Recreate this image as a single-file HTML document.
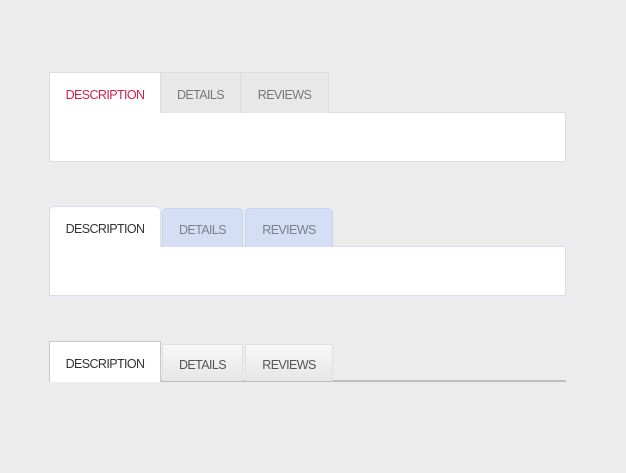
<!DOCTYPE html><html><head><style>
body{margin:0;width:626px;height:473px;background:#ececec;position:relative;font-family:"Liberation Sans",sans-serif;overflow:hidden}
div{position:absolute;box-sizing:border-box}
.t{display:flex;align-items:center;justify-content:center;font-size:12.5px;letter-spacing:-0.6px;color:#777;padding-top:3px}
</style></head><body>
<!-- panel 1 -->
<div style="left:49px;top:112px;width:517px;height:50px;background:#fff;border:1px solid #dcdcdc"></div>
<div class="t" style="left:160px;top:72px;width:81px;height:41px;background:#e8e8e8;border:1px solid #dcdcdc;border-bottom:none">DETAILS</div>
<div class="t" style="left:241px;top:72px;width:88px;height:41px;background:#e8e8e8;border:1px solid #dcdcdc;border-left:none;border-bottom:none">REVIEWS</div>
<div class="t" style="left:49px;top:72px;width:112px;height:41px;background:#fff;border:1px solid #dcdcdc;border-bottom:none;color:#d0204f">DESCRIPTION</div>
<!-- panel 2 -->
<div style="left:49px;top:246px;width:517px;height:50px;background:#fff;border:1px solid #d8dcec"></div>
<div class="t" style="left:162px;top:208px;width:81px;height:39px;background:#d4def5;border:1px solid #c8d2ea;border-bottom:none;border-radius:5px 5px 0 0;color:#7a8090">DETAILS</div>
<div class="t" style="left:245px;top:208px;width:88px;height:39px;background:#d4def5;border:1px solid #c8d2ea;border-bottom:none;border-radius:5px 5px 0 0;color:#7a8090">REVIEWS</div>
<div class="t" style="left:49px;top:206px;width:112px;height:41px;background:#fff;border:1px solid #d8dcec;border-bottom:none;border-radius:5px 5px 0 0;color:#333">DESCRIPTION</div>
<!-- panel 3 -->
<div style="left:49px;top:380px;width:517px;height:2px;background:#bdbdbd"></div>
<div class="t" style="left:162px;top:344px;width:81px;height:37px;background:linear-gradient(#f8f8f8,#e6e6e6);border:1px solid #e0e0e0;border-bottom:none;color:#555">DETAILS</div>
<div class="t" style="left:245px;top:344px;width:88px;height:37px;background:linear-gradient(#f8f8f8,#e6e6e6);border:1px solid #e0e0e0;border-bottom:none;color:#555">REVIEWS</div>
<div class="t" style="left:49px;top:341px;width:112px;height:41px;background:#fff;border:1px solid #c8c8c8;border-bottom:none;color:#333">DESCRIPTION</div>
</body></html>
